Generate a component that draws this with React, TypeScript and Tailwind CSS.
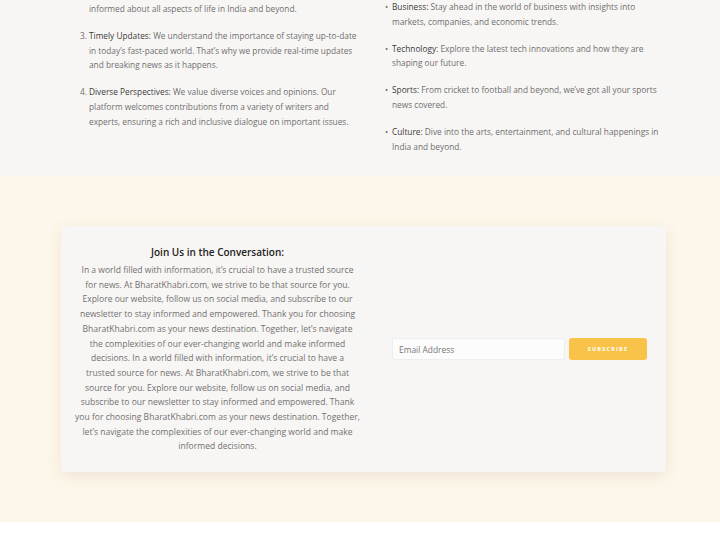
import React from "react";

const body = "font-['Open_Sans',sans-serif]";

const leftItems = [
  {
    n: 3,
    label: "Timely Updates:",
    text: " We understand the importance of staying up-to-date in today’s fast-paced world. That’s why we provide real-time updates and breaking news as it happens.",
  },
  {
    n: 4,
    label: "Diverse Perspectives:",
    text: " We value diverse voices and opinions. Our platform welcomes contributions from a variety of writers and experts, ensuring a rich and inclusive dialogue on important issues.",
  },
];

const rightItems = [
  { label: "Business:", text: " Stay ahead in the world of business with insights into markets, companies, and economic trends." },
  { label: "Technology:", text: " Explore the latest tech innovations and how they are shaping our future." },
  { label: "Sports:", text: " From cricket to football and beyond, we’ve got all your sports news covered." },
  { label: "Culture:", text: " Dive into the arts, entertainment, and cultural happenings in India and beyond." },
];

// lines as they wrap in the design
const joinLines = [
  "In a world filled with information, it’s crucial to have a trusted source",
  "for news. At BharatKhabri.com, we strive to be that source for you.",
  "Explore our website, follow us on social media, and subscribe to our",
  "newsletter to stay informed and empowered. Thank you for choosing",
  "BharatKhabri.com as your news destination. Together, let’s navigate",
  "the complexities of our ever-changing world and make informed",
  "decisions. In a world filled with information, it’s crucial to have a",
  "trusted source for news. At BharatKhabri.com, we strive to be that",
  "source for you. Explore our website, follow us on social media, and",
  "subscribe to our newsletter to stay informed and empowered. Thank",
  "you for choosing BharatKhabri.com as your news destination. Together,",
  "let’s navigate the complexities of our ever-changing world and make",
  "informed decisions.",
];

export default function App() {
  return (
    <div className={`w-[720px] h-[540px] overflow-hidden bg-white ${body}`}>
      {/* about section (scrolled) */}
      <section className="bg-[#f8f6f4] h-[176px] pl-[80px] flex text-[8.3px] leading-[14.6px] text-[#6e6e6e]">
        <div className="w-[285px] shrink-0 pt-[2px]">
          <p className="pl-[9px]">informed about all aspects of life in India and beyond.</p>
          {leftItems.map((it) => (
            <div key={it.n} className="flex mt-[12.5px]">
              <span className="w-[9px] shrink-0">{it.n}.</span>
              <p className="w-[270px]">
                <span className="font-medium text-[#3a3a3a]">{it.label}</span>
                {it.text}
              </p>
            </div>
          ))}
        </div>
        <ul className="w-[285px] shrink-0 ml-[20px]">
          {rightItems.map((it, i) => (
            <li key={it.label} className={`flex ${i > 0 ? "mt-[12.5px]" : ""}`}>
              <span className="w-[7px] shrink-0">•</span>
              <p className="w-[270px]">
                <span className="font-medium text-[#3a3a3a]">{it.label}</span>
                {it.text}
              </p>
            </li>
          ))}
        </ul>
      </section>

      {/* newsletter section */}
      <section className="bg-[#fdf7eb] h-[346px] pt-[50px]">
        <div className="ml-[61px] w-[605px] h-[246px] bg-[#f8f6f4] rounded-[4px] shadow-[0_4px_16px_rgba(120,100,60,0.12)] flex items-center">
          <div className="ml-[16px] w-[281px] shrink-0 text-center self-start pt-[18px]">
            <h3 className="text-[10px] font-semibold text-[#222] leading-[16px]">Join Us in the Conversation:</h3>
            <p className="mt-[3px] flex flex-col items-center text-[8.55px] leading-[14.7px] text-[#707070]">
              {joinLines.map((l, i) => (
                <span key={i} className="whitespace-nowrap">{l}</span>
              ))}
            </p>
          </div>
          <div className="ml-[34px] flex gap-[4px] shrink-0">
            <input
              className="w-[173px] h-[22px] bg-[#fcfcfc] border border-[#eeeeee] rounded-[2px] px-[6px] text-[8.4px] text-[#555] placeholder:text-[#777] outline-none"
              placeholder="Email Address"
            />
            <button className="w-[78px] h-[22px] bg-[#f9c349] rounded-[3px] text-white text-[5.5px] font-bold tracking-[1.2px]">
              SUBSCRIBE
            </button>
          </div>
        </div>
      </section>
    </div>
  );
}
